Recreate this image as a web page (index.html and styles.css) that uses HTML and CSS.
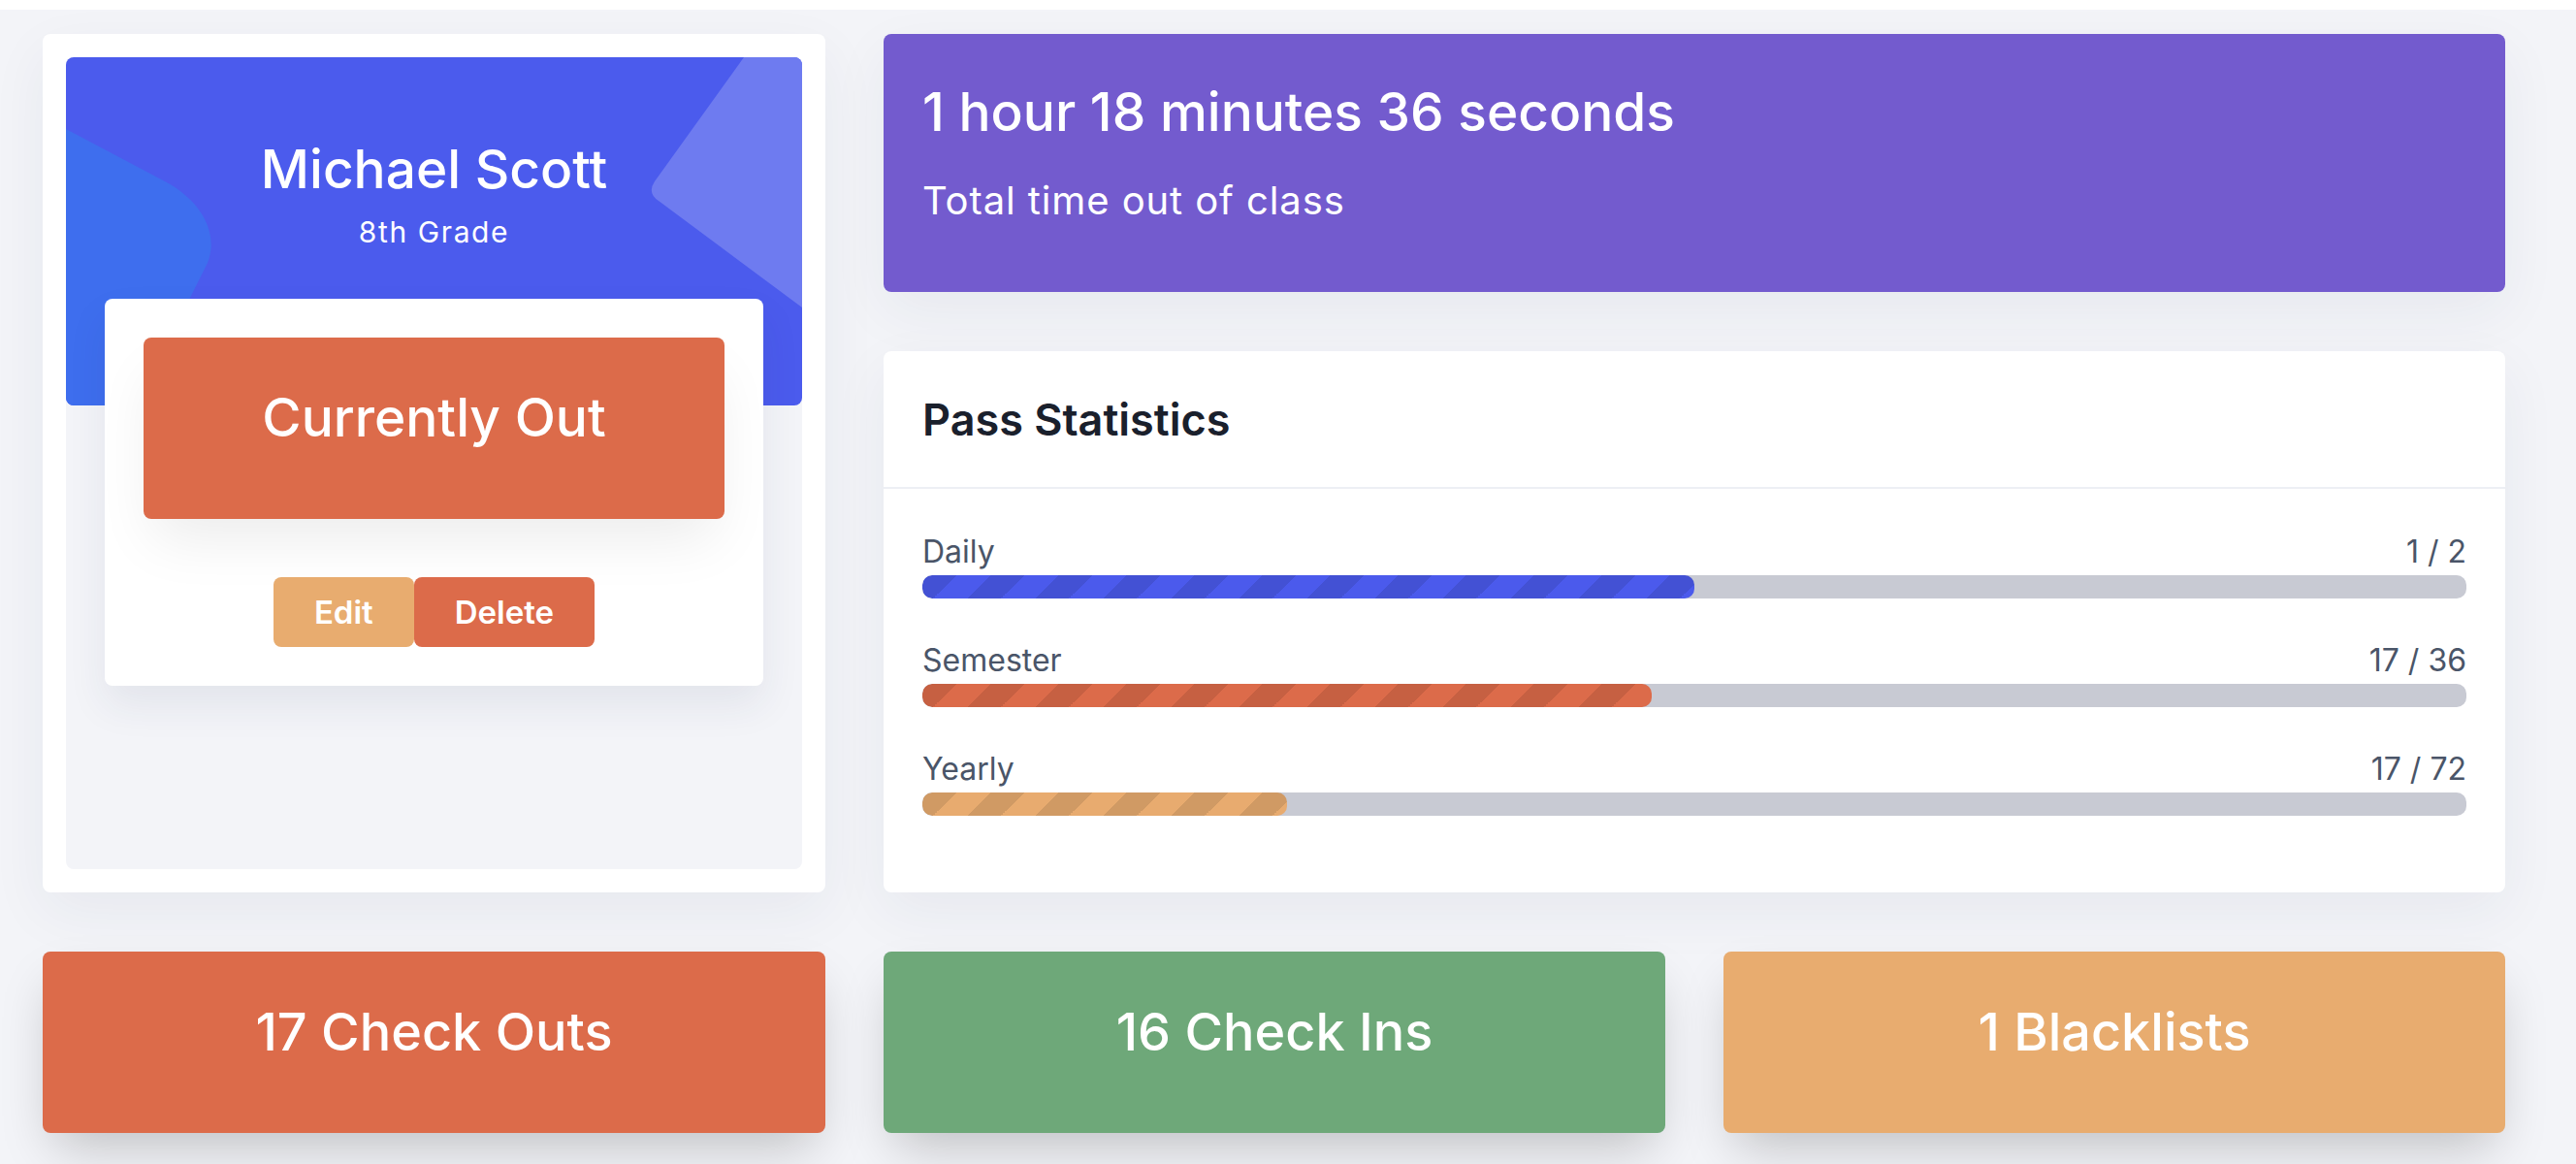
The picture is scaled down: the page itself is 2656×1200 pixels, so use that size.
FILE: index.html
```html
<!DOCTYPE html>
<html lang="en">
<head>
<meta charset="utf-8">
<title>Student Passes</title>
<link rel="stylesheet" href="styles.css">
</head>
<body>
<div class="topbar"></div>
<main class="dashboard">
  <section class="card profile-card">
    <div class="profile-inner">
      <div class="profile-header">
        <svg class="header-art" viewBox="0 0 759 359" preserveAspectRatio="none" aria-hidden="true">
          <path d="M0,74 L102,128 C140,148 158,182 146,212 L127,250 L68,359 L0,359 Z" fill="#3e6eee"/>
          <path d="M699,0 L607,128 Q599,140 611,148 L759,258 L759,0 Z" fill="#6e7bf0"/>
        </svg>
        <h1 class="student-name">Michael Scott</h1>
        <p class="student-grade">8th Grade</p>
      </div>
      <div class="status-card">
        <div class="status-button">Currently Out</div>
        <div class="action-row">
          <button class="btn btn-edit">Edit</button>
          <button class="btn btn-delete">Delete</button>
        </div>
      </div>
    </div>
  </section>

  <div class="right-column">
    <section class="time-card">
      <h2 class="time-value">1 hour 18 minutes 36 seconds</h2>
      <p class="time-label">Total time out of class</p>
    </section>

    <section class="card stats-card">
      <header class="stats-header">
        <h2 class="stats-title">Pass Statistics</h2>
      </header>
      <div class="stats-body">
        <div class="stat-row">
          <div class="stat-labels"><span>Daily</span><span>1 / 2</span></div>
          <div class="track"><div class="fill fill-blue" style="width:50%"></div></div>
        </div>
        <div class="stat-row">
          <div class="stat-labels"><span>Semester</span><span>17 / 36</span></div>
          <div class="track"><div class="fill fill-orange" style="width:47.22%"></div></div>
        </div>
        <div class="stat-row">
          <div class="stat-labels"><span>Yearly</span><span>17 / 72</span></div>
          <div class="track"><div class="fill fill-yellow" style="width:23.61%"></div></div>
        </div>
      </div>
    </section>
  </div>

  <section class="tile tile-orange">17 Check Outs</section>
  <section class="tile tile-green">16 Check Ins</section>
  <section class="tile tile-yellow">1 Blacklists</section>
</main>
</body>
</html>
```

FILE: styles.css
```css
* { box-sizing: border-box; }

html, body {
  margin: 0;
  padding: 0;
}

body {
  background: #f3f4f8;
  font-family: "Inter", "Open Sans", "Liberation Sans", sans-serif;
  color: #1a202c;
  width: 2656px;
  height: 1200px;
  overflow: hidden;
}

.topbar {
  height: 10px;
  background: #ffffff;
}

.dashboard {
  display: grid;
  grid-template-columns: 807px 806px 806px;
  column-gap: 60px;
  row-gap: 61px;
  padding: 25px 0 0 44px;
}

.card {
  background: #ffffff;
  border-radius: 8px;
  box-shadow: 0 20px 60px rgba(40, 50, 90, 0.06);
}

/* ---------- profile ---------- */
.profile-card {
  padding: 24px;
  display: flex;
}

.profile-inner {
  flex: 1;
  background: #f3f4f8;
  border-radius: 8px;
}

.profile-header {
  position: relative;
  height: 359px;
  background: #4b5bed;
  border-radius: 8px;
  overflow: hidden;
  padding-top: 82px;
  text-align: center;
  color: #ffffff;
}

.header-art {
  position: absolute;
  left: 0;
  top: 0;
  width: 100%;
  height: 100%;
}

.student-name {
  position: relative;
  margin: 0;
  font-size: 55px;
  line-height: 1.2;
  font-weight: 500;
}

.student-grade {
  position: relative;
  margin: 10px 0 0;
  font-size: 30px;
  line-height: 1.5;
  font-weight: 400;
  letter-spacing: 1.6px;
}

.status-card {
  position: relative;
  margin: -110px 40px 0;
  background: #ffffff;
  border-radius: 8px;
  padding: 40px;
  box-shadow: 0 20px 40px rgba(40, 50, 90, 0.08);
}

.status-button {
  height: 187px;
  background: #dc6b4a;
  border-radius: 8px;
  color: #ffffff;
  font-size: 55px;
  font-weight: 500;
  display: flex;
  align-items: center;
  justify-content: center;
  padding-bottom: 24px;
  box-shadow: 0 30px 60px -10px rgba(0, 0, 0, 0.08);
}

.action-row {
  display: flex;
  justify-content: center;
  margin-top: 60px;
}

.btn {
  height: 72px;
  padding: 0 42px;
  border: none;
  border-radius: 8px;
  color: #ffffff;
  font-family: inherit;
  font-size: 33px;
  font-weight: 600;
}

.btn-edit { background: #e8ac6f; }
.btn-delete { background: #dc6b4a; }

/* ---------- right column ---------- */
.right-column {
  grid-column: 2 / span 2;
  display: flex;
  flex-direction: column;
  gap: 61px;
}

.time-card {
  height: 266px;
  background: #735bce;
  border-radius: 8px;
  color: #ffffff;
  padding: 47px 40px 0;
  box-shadow: 0 20px 60px rgba(40, 50, 90, 0.06);
}

.time-value {
  margin: 0;
  font-size: 55px;
  line-height: 1.2;
  font-weight: 500;
}

.time-label {
  margin: 31px 0 0;
  font-size: 40px;
  line-height: 1.4;
  font-weight: 400;
  letter-spacing: 0.9px;
}

.stats-card {
  height: 558px;
}

.stats-header {
  padding: 44px 40px 42px;
  border-bottom: 2px solid #edeff4;
}

.stats-title {
  margin: 0;
  font-size: 45px;
  line-height: 1.2;
  font-weight: 600;
  color: #1a202c;
}

.stats-body {
  padding: 42px 40px 0;
  display: flex;
  flex-direction: column;
  gap: 41px;
}

.stat-labels {
  display: flex;
  justify-content: space-between;
  font-size: 32px;
  line-height: 45px;
  color: #4a5568;
  margin-bottom: 2px;
}

.track {
  height: 24px;
  background: #c8cad3;
  border-radius: 10px;
  overflow: hidden;
}

.fill {
  height: 100%;
  border-radius: 10px;
  background-size: 70px 70px;
}

.fill-blue {
  background-color: #4b5aec;
  background-image: linear-gradient(135deg, rgba(0,0,0,.1) 25%, transparent 25%, transparent 50%, rgba(0,0,0,.1) 50%, rgba(0,0,0,.1) 75%, transparent 75%, transparent);
}

.fill-orange {
  background-color: #dc6b4a;
  background-image: linear-gradient(135deg, rgba(0,0,0,.1) 25%, transparent 25%, transparent 50%, rgba(0,0,0,.1) 50%, rgba(0,0,0,.1) 75%, transparent 75%, transparent);
}

.fill-yellow {
  background-color: #e8ab6f;
  background-image: linear-gradient(135deg, rgba(0,0,0,.1) 25%, transparent 25%, transparent 50%, rgba(0,0,0,.1) 50%, rgba(0,0,0,.1) 75%, transparent 75%, transparent);
}

/* ---------- tiles ---------- */
.tile {
  height: 187px;
  border-radius: 8px;
  color: #ffffff;
  font-size: 54px;
  font-weight: 500;
  display: flex;
  align-items: center;
  justify-content: center;
  padding-bottom: 22px;
  box-shadow: 0 25px 50px -12px rgba(0, 0, 0, 0.22);
}

.tile-orange { background: #dc6b4a; }
.tile-green { background: #6ea879; }
.tile-yellow { background: #e8ac6f; }
```
